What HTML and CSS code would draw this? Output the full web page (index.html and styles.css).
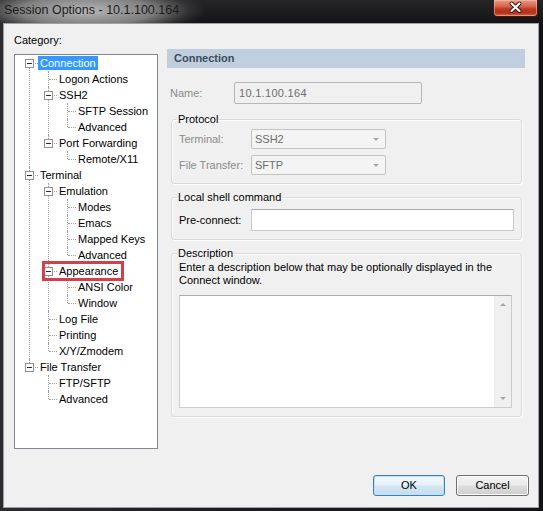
FILE: index.html
```html
<!DOCTYPE html>
<html>
<head>
<meta charset="utf-8">
<link rel="stylesheet" href="styles.css">
</head>
<body>
<div class="window">
  <div class="titlebar">
    <div class="title">Session Options - 10.1.100.164</div>
    <div class="close">
      <svg width="45" height="17" viewBox="0 0 45 17">
        <path d="M18.5 4.5 L26.5 12 M26.5 4.5 L18.5 12" stroke="#3b0f08" stroke-width="4" stroke-linecap="round"/>
        <path d="M18.5 4.5 L26.5 12 M26.5 4.5 L18.5 12" stroke="#ffffff" stroke-width="2.2" stroke-linecap="round"/>
      </svg>
    </div>
  </div>
  <div class="client">
    <div class="content">
      <div class="left">
        <div class="cat">Category:</div>
        <div class="treebox">
          <ul class="tree">
            <li><span class="exp"></span><span class="lbl sel">Connection</span>
              <ul>
                <li><span class="lbl">Logon Actions</span></li>
                <li><span class="exp"></span><span class="lbl">SSH2</span>
                  <ul>
                    <li><span class="lbl">SFTP Session</span></li>
                    <li><span class="lbl">Advanced</span></li>
                  </ul>
                </li>
                <li><span class="exp"></span><span class="lbl">Port Forwarding</span>
                  <ul>
                    <li><span class="lbl">Remote/X11</span></li>
                  </ul>
                </li>
              </ul>
            </li>
            <li><span class="exp"></span><span class="lbl">Terminal</span>
              <ul>
                <li><span class="exp"></span><span class="lbl">Emulation</span>
                  <ul>
                    <li><span class="lbl">Modes</span></li>
                    <li><span class="lbl">Emacs</span></li>
                    <li><span class="lbl">Mapped Keys</span></li>
                    <li><span class="lbl">Advanced</span></li>
                  </ul>
                </li>
                <li><span class="exp"></span><span class="lbl">Appearance</span><span class="mark"></span>
                  <ul>
                    <li><span class="lbl">ANSI Color</span></li>
                    <li><span class="lbl">Window</span></li>
                  </ul>
                </li>
                <li><span class="lbl">Log File</span></li>
                <li><span class="lbl">Printing</span></li>
                <li><span class="lbl">X/Y/Zmodem</span></li>
              </ul>
            </li>
            <li><span class="exp"></span><span class="lbl">File Transfer</span>
              <ul>
                <li><span class="lbl">FTP/SFTP</span></li>
                <li><span class="lbl">Advanced</span></li>
              </ul>
            </li>
          </ul>
        </div>
      </div>
      <div class="right">
        <div class="header">Connection</div>
        <div class="namerow">
          <span class="nlabel dis">Name:</span>
          <div class="nameinput">10.1.100.164</div>
        </div>
        <fieldset class="group proto">
          <legend>Protocol</legend>
          <div class="row">
            <span class="flabel dis">Terminal:</span>
            <div class="combo"><span>SSH2</span><i class="arrow"></i></div>
          </div>
          <div class="row row2">
            <span class="flabel dis">File Transfer:</span>
            <div class="combo"><span>SFTP</span><i class="arrow"></i></div>
          </div>
        </fieldset>
        <fieldset class="group shell">
          <legend>Local shell command</legend>
          <div class="row">
            <span class="flabel">Pre-connect:</span>
            <div class="textbox"></div>
          </div>
        </fieldset>
        <fieldset class="group desc">
          <legend>Description</legend>
          <p class="desctext">Enter a description below that may be optionally displayed in the Connect window.</p>
          <div class="memo">
            <div class="memoarea"></div>
            <div class="vscroll">
              <i class="up"></i>
              <i class="down"></i>
            </div>
          </div>
        </fieldset>
      </div>
    </div>
    <div class="buttons">
      <div class="btn ok">OK</div>
      <div class="btn cancel">Cancel</div>
    </div>
  </div>
</div>
</body>
</html>
```
FILE: styles.css
```css
* { box-sizing: border-box; }
html, body {
  margin: 0;
  padding: 0;
}
body {
  width: 543px;
  height: 511px;
  overflow: hidden;
  background: #1b1b1d;
  font-family: "Liberation Sans", Arial, sans-serif;
  font-size: 11px;
  color: #000;
}
.window {
  width: 543px;
  height: 511px;
  display: flex;
  flex-direction: column;
  background: linear-gradient(90deg, #2c2c2e 0%, #1d1d20 40%, #141417 100%);
}
.titlebar {
  height: 23px;
  display: flex;
  align-items: flex-start;
  background:
    radial-gradient(ellipse 120px 26px at 86px 11px, rgba(190,190,190,0.95) 0%, rgba(160,160,160,0.75) 55%, rgba(110,110,110,0.25) 85%, rgba(0,0,0,0) 100%),
    linear-gradient(180deg, #262628 0%, #141416 100%);
}
.title {
  padding: 3px 0 0 4px;
  font-size: 12.5px;
  line-height: 15px;
  color: #1c1c1c;
  white-space: nowrap;
}
.close {
  margin-left: auto;
  margin-right: 5px;
  width: 45px;
  height: 17px;
  border: 1px solid #4a150d;
  border-top: none;
  border-radius: 0 0 4px 4px;
  background: linear-gradient(180deg, #e39b87 0%, #d5644b 40%, #c0391f 55%, #b33219 80%, #d26a4e 100%);
  box-shadow: inset 0 0 0 1px rgba(255,210,200,0.45);
  overflow: hidden;
}
.close svg { display: block; margin: -1px 0 0 -1px; }
.client {
  margin: 0 4px 3px 3px;
  flex: 1;
  border: 1px solid #9da2a8;
  background: #f0f0f0;
  display: flex;
  flex-direction: column;
}
.content {
  display: flex;
}
.left {
  padding: 9px 0 0 10px;
}
.cat {
  line-height: 14px;
}
.treebox {
  margin-top: 7px;
  width: 144px;
  height: 395px;
  background: #fff;
  border: 1px solid #828790;
  padding: 0 0 0 5px;
  overflow: hidden;
}
.tree, .tree ul {
  list-style: none;
  margin: 0;
  padding: 0;
}
.tree li {
  position: relative;
  padding-left: 19px;
}
.tree li::before {
  content: "";
  position: absolute;
  left: 9px;
  top: 0;
  bottom: 0;
  border-left: 1px dotted #a0a0a0;
}
.tree li:last-child::before {
  bottom: auto;
  height: 8px;
}
.tree > li:first-child::before {
  top: 8px;
}
.tree li::after {
  content: "";
  position: absolute;
  left: 10px;
  top: 8px;
  width: 8px;
  border-top: 1px dotted #a0a0a0;
}
.exp {
  position: absolute;
  z-index: 2;
  left: 5px;
  top: 4px;
  width: 9px;
  height: 9px;
  border: 1px solid #919191;
  background: #fff;
}
.exp::before {
  content: "";
  position: absolute;
  left: 1px;
  top: 3px;
  width: 5px;
  height: 1px;
  background: #2a2a2a;
}
.lbl {
  display: block;
  width: fit-content;
  height: 16px;
  line-height: 16px;
  margin-left: -1px;
  padding: 0 2px;
  white-space: nowrap;
}
.lbl.sel {
  background: linear-gradient(180deg, transparent 1px, #3399ff 1px, #3399ff 15px, transparent 15px);
  color: #fff;
}
.mark {
  position: absolute;
  z-index: 3;
  left: 3px;
  top: -2px;
  width: 82px;
  height: 20px;
  border: 3px solid #d2404c;
}
.right {
  margin-left: 9px;
  padding-top: 25px;
  width: 358px;
}
.header {
  height: 19px;
  line-height: 19px;
  padding-left: 7px;
  background: #bfcfdd;
  color: #3d4b59;
  font-weight: bold;
}
.namerow {
  margin-top: 14px;
  display: flex;
  align-items: center;
}
.dis { color: #8b8b8b; }
.nlabel {
  width: 67px;
  padding-left: 3px;
}
.nameinput {
  width: 188px;
  height: 22px;
  line-height: 20px;
  padding-left: 4px;
  border: 1px solid #b6b6b6;
  border-radius: 2px;
  background: #f0f0f0;
  color: #6e6e6e;
  letter-spacing: 0.3px;
}
.group {
  margin: 0 3px 0 4px;
  padding: 0 7px 8px 7px;
  border: 1px solid #d9d9d9;
  border-radius: 3px;
  box-shadow: inset 1px 1px 0 #fff, 1px 1px 0 #fff;
  min-width: 0;
}
.group legend {
  padding: 0 1px;
  margin-left: -2px;
  line-height: 14px;
}
.proto { margin-top: 8px; }
.proto > .row:first-of-type { margin-top: 3px; }
.row {
  display: flex;
  align-items: center;
}
.row2 { margin-top: 6px; }
.flabel {
  width: 72px;
  white-space: nowrap;
}
.combo {
  position: relative;
  width: 135px;
  height: 20px;
  line-height: 18px;
  padding-left: 3px;
  border: 1px solid #c2c2c2;
  border-radius: 2px;
  background: #f4f4f4;
  color: #6d6d6d;
}
.arrow {
  position: absolute;
  right: 6px;
  top: 8px;
  width: 0;
  height: 0;
  border-left: 3px solid transparent;
  border-right: 3px solid transparent;
  border-top: 3px solid #a7a7a7;
}
.shell { margin-top: 6px; }
.shell .row { margin-top: 5px; }
.textbox {
  width: 263px;
  height: 22px;
  background: #fff;
  border: 1px solid #c5c9cf;
  border-top-color: #abadb3;
}
.desc { margin-top: 6px; }
.desctext {
  margin: 1px 0 0 0;
  line-height: 13px;
}
.memo {
  margin-top: 8px;
  width: 333px;
  height: 113px;
  display: flex;
  background: #fff;
  border: 1px solid #c9cdd2;
  border-top-color: #abadb3;
}
.memoarea { flex: 1; }
.vscroll {
  position: relative;
  width: 17px;
  background: #f0f0f0;
  border-left: 1px solid #ececec;
  display: flex;
  flex-direction: column;
  justify-content: space-between;
  align-items: center;
  padding: 7px 0 7px 0;
}
.vscroll i {
  width: 0;
  height: 0;
  border-left: 3px solid transparent;
  border-right: 3px solid transparent;
}
.vscroll .up { border-bottom: 3px solid #a6a6a6; }
.vscroll .down { border-top: 3px solid #a6a6a6; }
.buttons {
  margin-top: auto;
  display: flex;
  justify-content: flex-end;
  gap: 11px;
  padding: 0 9px 11px 0;
}
.btn {
  height: 21px;
  line-height: 19px;
  text-align: center;
  border-radius: 3px;
}
.ok {
  width: 72px;
  border: 1px solid #3c7fb1;
  background: linear-gradient(180deg, #f3f9fd 0%, #e6f1f9 48%, #d3e6f4 52%, #c6ddee 100%);
  box-shadow: inset 0 0 0 1px #bfe2f8;
}
.cancel {
  width: 73px;
  border: 1px solid #707070;
  background: linear-gradient(180deg, #f2f2f2 0%, #ebebeb 48%, #dddddd 52%, #cfcfcf 100%);
  box-shadow: inset 0 0 0 1px #fbfbfb;
}
```
